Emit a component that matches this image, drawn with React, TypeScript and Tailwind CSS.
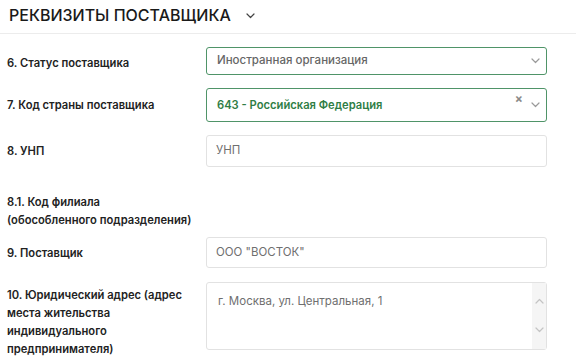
import React from "react";

const Chevron = ({ className = "" }: { className?: string }) => (
  <svg width="9" height="6" viewBox="0 0 9 6" className={className} fill="none">
    <path d="M1 1l3.5 3.5L8 1" stroke="currentColor" strokeWidth="1.2" strokeLinecap="round" strokeLinejoin="round" />
  </svg>
);

const ChevronUp = ({ className = "" }: { className?: string }) => (
  <svg width="9" height="6" viewBox="0 0 9 6" className={className} fill="none">
    <path d="M1 5l3.5-3.5L8 5" stroke="currentColor" strokeWidth="1.2" strokeLinecap="round" strokeLinejoin="round" />
  </svg>
);

const Label = ({ children, className = "" }: { children: React.ReactNode; className?: string }) => (
  <div className={`w-[199px] shrink-0 text-[11.2px] leading-[18px] font-semibold text-[#222] ${className}`}>{children}</div>
);

export default function App() {
  return (
    <div className="w-[576px] h-[360px] overflow-hidden bg-white font-['Inter','Liberation_Sans',sans-serif]">
      <div className="h-[33px] pl-[9px] pt-[5px] flex items-start">
        <div className="flex items-center gap-[15px] text-[16px] leading-[20px] font-medium text-[#1a1a1a]">
          <span>РЕКВИЗИТЫ ПОСТАВЩИКА</span>
          <Chevron className="text-[#444] mt-[2px]" />
        </div>
      </div>
      <div className="h-px bg-[#ececec]" />

      <div className="pl-[7px] pt-[13px] flex flex-col">
        {/* 6 */}
        <div className="flex items-center">
          <Label className="pt-[3px]">6. Статус поставщика</Label>
          <div className="w-[341px] h-[28px] border border-[#4f9468] rounded-[3px] flex items-center pl-[10px] pr-[6px]">
            <span className="flex-1 text-[11.5px] font-medium text-[#666]">Иностранная организация</span>
            <Chevron className="text-[#9a9a9a]" />
          </div>
        </div>

        {/* 7 */}
        <div className="flex items-center mt-[13px]">
          <Label>7. Код страны поставщика</Label>
          <div className="w-[341px] h-[34px] border border-[#4f9468] rounded-[3px] flex items-center pl-[10px] pr-[6px]">
            <span className="flex-1 text-[11.2px] font-semibold text-[#2f7d45]">643 - Российская Федерация</span>
            <span className="text-[12px] font-bold text-[#8a8a8a] leading-none -mt-[12px] mr-[8px]">×</span>
            <Chevron className="text-[#9a9a9a]" />
          </div>
        </div>

        {/* 8 */}
        <div className="flex items-center mt-[13px]">
          <Label>8. УНП</Label>
          <div className="w-[341px] h-[32px] border border-[#e2e2e2] rounded-[3px] flex items-center pl-[9px]">
            <span className="text-[11.5px] text-[#6f6f6f]">УНП</span>
          </div>
        </div>

        {/* 8.1 */}
        <div className="flex mt-[26px]">
          <Label>
            8.1. Код филиала
            <br />
            (обособленного подразделения)
          </Label>
        </div>

        {/* 9 */}
        <div className="flex items-center mt-[8px]">
          <Label>9. Поставщик</Label>
          <div className="w-[341px] h-[31px] border border-[#e2e2e2] rounded-[3px] flex items-center pl-[9px]">
            <span className="text-[11.5px] text-[#6f6f6f]">ООО "ВОСТОК"</span>
          </div>
        </div>

        {/* 10 */}
        <div className="flex items-start mt-[14px]">
          <Label className="mt-[4px]">
            10. Юридический адрес (адрес
            <br />
            места жительства
            <br />
            индивидуального
            <br />
            предпринимателя)
          </Label>
          <div className="w-[341px] h-[68px] border border-[#e2e2e2] rounded-[3px] flex">
            <div className="flex-1 pl-[11px] pt-[10px] text-[11.5px] leading-[16px] text-[#6f6f6f]">г. Москва, ул. Центральная, 1</div>
            <div className="w-[14px] bg-[#f5f5f5] flex flex-col items-center justify-between pt-[15px] pb-[16px]">
              <ChevronUp className="text-[#c4c4c4]" />
              <Chevron className="text-[#c4c4c4]" />
            </div>
          </div>
        </div>
      </div>
    </div>
  );
}
